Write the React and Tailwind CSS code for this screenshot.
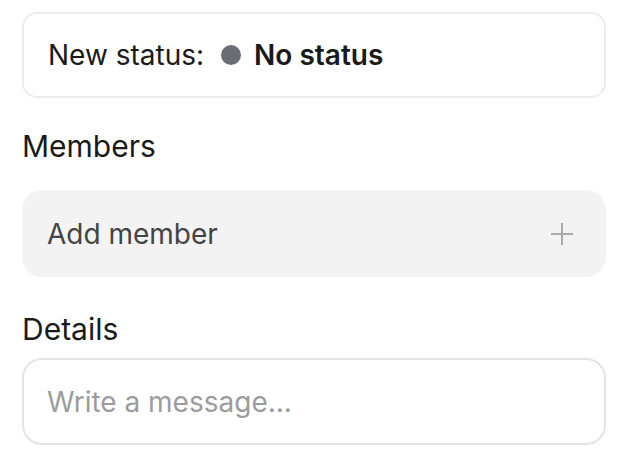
export default function App() {
  return (
    <div className="w-[622px] h-[468px] bg-white" style={{ fontFamily: "Inter, 'Noto Sans', sans-serif" }}>
      <div className="ml-[22px] w-[584px] pt-[12px] flex flex-col">
        <div className="h-[86px] rounded-[15px] border-2 border-[#ececf0] flex items-center px-[24px] text-[28px] text-[#1a1a1a]">
          <span>New status:</span>
          <span className="ml-[17px] w-[20px] h-[20px] rounded-full bg-[#6b6d75]" />
          <span className="ml-[13px] font-semibold">No status</span>
        </div>
        <div className="mt-[30px] text-[30px] text-[#1a1a1a] leading-[36px]">Members</div>
        <div className="mt-[26px] h-[87px] rounded-[20px] bg-[#f3f3f3] flex items-center justify-between pl-[25px] pr-[32px]">
          <span className="text-[28px] text-[#444]">Add member</span>
          <svg width="24" height="24" viewBox="0 0 24 24" className="text-[#aaa]">
            <path d="M12 1v22M1 12h22" stroke="currentColor" strokeWidth="2" fill="none" />
          </svg>
        </div>
        <div className="mt-[34px] text-[30px] text-[#1a1a1a] leading-[36px]">Details</div>
        <div className="mt-[11px] h-[87px] rounded-[20px] border-2 border-[#e4e4e4] flex items-center px-[23px]">
          <span className="text-[28px] text-[#9c9c9c]">Write a message...</span>
        </div>
      </div>
    </div>
  );
}
